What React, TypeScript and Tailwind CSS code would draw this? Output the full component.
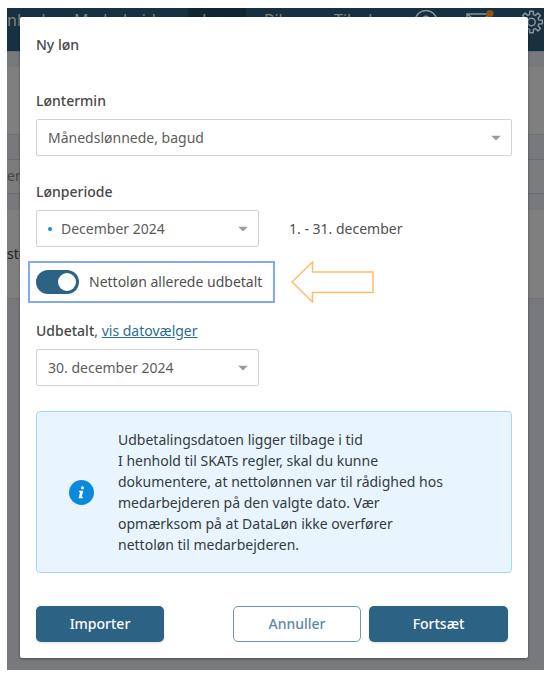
import { useState } from "react";
import type { ReactNode } from "react";

interface SelectFieldProps {
  id: string;
  options: string[];
  marked?: boolean;
  className?: string;
}

function SelectField({ id, options, marked = false, className = "" }: SelectFieldProps) {
  return (
    <div className={`relative ${className}`}>
      {marked && (
        <span className="pointer-events-none absolute top-1/2 left-3 size-1 -translate-y-1/2 rounded-full bg-[#1389dc]" />
      )}
      <select
        id={id}
        className={`h-[37px] w-full appearance-none rounded-xs border border-[#d2d2d2] bg-white pr-8 text-sm text-[#5c5c5c] ${
          marked ? "pl-6" : "pl-[11px]"
        }`}
      >
        {options.map((option) => (
          <option key={option}>{option}</option>
        ))}
      </select>
      <svg
        viewBox="0 0 10 5"
        className="pointer-events-none absolute top-1/2 right-[11px] h-[5px] w-[10px] -translate-y-1/2 fill-[#9b9b9b]"
      >
        <path d="M0 0h10L5 5z" />
      </svg>
    </div>
  );
}

function Label({ htmlFor, children }: { htmlFor: string; children: ReactNode }) {
  return (
    <label htmlFor={htmlFor} className="font-medium text-[#484848]">
      {children}
    </label>
  );
}

// Eight teeth, four corners each
const gearPoints = Array.from({ length: 8 })
  .flatMap((_, i) =>
    [
      [7.6, -15],
      [11, -9],
      [11, 9],
      [7.6, 15],
    ].map(([r, offset]) => {
      const angle = ((i * 45 + offset) * Math.PI) / 180;
      return `${(11.5 + r * Math.cos(angle)).toFixed(2)},${(12 + r * Math.sin(angle)).toFixed(2)}`;
    })
  )
  .join(" ");

function Backdrop() {
  return (
    <div className="absolute inset-0 flex flex-col overflow-hidden bg-[#77797c]" aria-hidden="true">
      <div className="flex h-[43px] shrink-0 bg-[#183142] text-base leading-6 whitespace-nowrap text-[#85827e]">
        <span className="w-[67px]">nheder</span>
        <span className="w-[114px]">Medarbejder</span>
        <span className="w-[58px] bg-[#122532] pl-[14px]">Løn</span>
        <span className="w-[88px] pl-[18px]">Bilag</span>
        <span className="w-20">Tilvalg</span>
        <div className="flex flex-1 items-start justify-between pt-[2px]">
          <svg viewBox="0 0 24 24" className="size-6 fill-none stroke-[#8b9298] stroke-[1.5]">
            <circle cx="12" cy="11.500" r="11" />
            <path d="M9 9a3 3 0 1 1 4 3c-1 .5-1 1-1 2M12 17v1" />
          </svg>
          <svg viewBox="0 0 30 24" className="h-6 w-[30px] fill-none">
            <path d="M3 4h23v16H3zl11.500 9L26 4" className="stroke-[#8b9298] stroke-[1.500]" />
            <circle cx="26" cy="3.500" r="3.500" className="fill-[#905500]" />
          </svg>
          <svg
            viewBox="0 0 24 24"
            className="size-6 fill-none stroke-[#8b9298] stroke-[1.500]"
            strokeLinejoin="round"
          >
            <polygon points={gearPoints} />
            <circle cx="11.500" cy="12" r="3.700" />
          </svg>
        </div>
      </div>
      <div className="h-4 shrink-0 border-t border-[#6b6d70]" />
      <div className="h-[68px] shrink-0 border-b border-[#707173] bg-[#7f7f7f]" />
      <div className="h-[75px] shrink-0 pt-6">
        <div className="h-[35px] border-y border-[#6c6c6e] bg-[#7b7c7e] text-sm leading-8 text-[#454545]">en</div>
      </div>
      <div className="h-[89px] shrink-0 border-b border-[#707173] bg-[#7f7f7f] pt-[34px] text-sm text-[#222222]">
        ster
      </div>
    </div>
  );
}

export default function App() {
  const [paid, setPaid] = useState(true);

  return (
    <main className="bg-white pt-2 pr-[14px] pb-2 pl-[7px] font-['Noto_Sans','Open_Sans',sans-serif] text-sm leading-5 text-[#505050]">
      <div className="relative pt-[9px] pr-4 pb-3 pl-[13px]">
        <Backdrop />

        <div
          role="dialog"
          aria-labelledby="dialog-title"
          className="relative rounded-xs bg-white px-4 pt-[18px] pb-4 shadow-[0_1px_3px_rgba(0,0,0,0.4)]"
        >
          <h1 id="dialog-title" className="font-medium text-[#484848]">
            Ny løn
          </h1>

          <div className="mt-9 flex flex-col gap-2">
            <Label htmlFor="termin">Løntermin</Label>
            <SelectField id="termin" options={["Månedslønnede, bagud", "Månedslønnede, forud"]} />
          </div>

          <div className="mt-[26px] flex flex-col gap-2">
            <Label htmlFor="periode">Lønperiode</Label>
            <div className="flex items-center gap-[30px]">
              <SelectField
                id="periode"
                options={["December 2024", "Januar 2025"]}
                marked
                className="w-[223px]"
              />
              <span>1. - 31. december</span>
            </div>
          </div>

          <div className="-ml-2 mt-[14px] flex items-center gap-4">
            <label className="flex h-[42px] w-[247px] items-center gap-[10px] border-2 border-[#82aaf3] pl-[6px] whitespace-nowrap">
              <input
                type="checkbox"
                role="switch"
                checked={paid}
                onChange={(e) => setPaid(e.target.checked)}
                className="relative h-6 w-[43px] shrink-0 appearance-none rounded-full bg-[#a5a5a5] before:absolute before:top-[3px] before:left-[3px] before:size-[18px] before:rounded-full before:bg-white checked:bg-[#2c6284] checked:before:left-[22px]"
              />
              Nettoløn allerede udbetalt
            </label>
            <svg viewBox="0 0 83 42" className="h-[42px] w-[83px] fill-none stroke-[#fbbd6c] stroke-[1.500]">
              <path d="M1 21 21.500 1V11H82V31.500H21.500V41z" />
            </svg>
          </div>

          <div className="mt-[18px] flex flex-col gap-2">
            <div>
              <Label htmlFor="udbetalt">Udbetalt</Label>,{" "}
              <a href="#datovaelger" className="text-[#2c6b96] underline">
                vis datovælger
              </a>
            </div>
            <SelectField id="udbetalt" options={["30. december 2024", "31. december 2024"]} className="w-[223px]" />
          </div>

          <div className="mt-[25px] flex items-center gap-6 rounded-sm border border-[#a5d8f5] bg-[#e8f5fe] py-[17px] pr-16 pl-8 text-[#343b40]">
            <svg viewBox="0 0 25 25" className="size-[25px] shrink-0">
              <circle cx="12.500" cy="12.500" r="12.500" className="fill-[#0a8ade]" />
              <circle cx="13.500" cy="7.800" r="1.500" className="fill-white" />
              <path d="M10.300 10.700h4l-1.600 6h1.200l-.3 1.500h-4l1.500-6h-1.200z" className="fill-white" />
            </svg>
            <div className="leading-[21px]">
              <p>Udbetalingsdatoen ligger tilbage i tid</p>
              <p>
                I henhold til SKATs regler, skal du kunne dokumentere, at nettolønnen var til rådighed hos
                medarbejderen på den valgte dato. Vær opmærksom på at DataLøn ikke overfører nettoløn til
                medarbejderen.
              </p>
            </div>
          </div>

          <div className="mt-[33px] flex gap-2 pr-1 font-medium">
            <button className="mr-auto h-9 w-32 rounded-[5px] bg-[#2c6284] text-white shadow-sm">Importer</button>
            <button className="h-9 w-32 rounded-[5px] border border-[#6f9ab3] bg-white text-[#5c89a5]">
              Annuller
            </button>
            <button className="h-9 w-[139px] rounded-[5px] bg-[#2c6284] text-white shadow-sm">Fortsæt</button>
          </div>
        </div>
      </div>
    </main>
  );
}
